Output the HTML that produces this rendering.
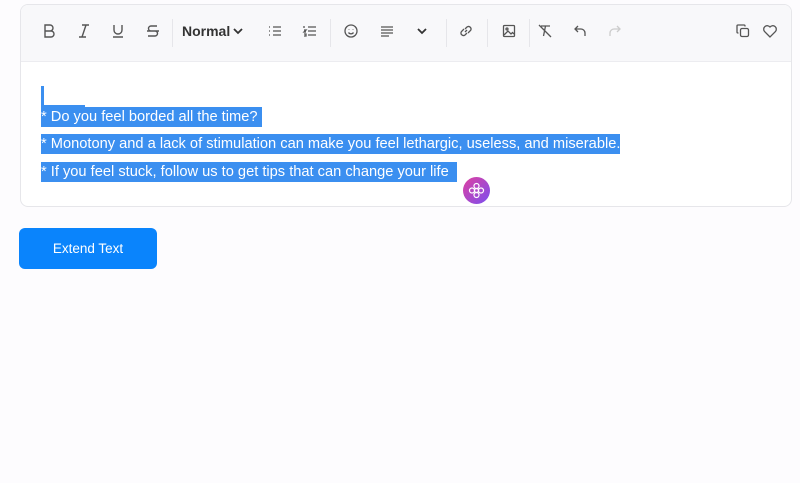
<!DOCTYPE html>
<html><head><style>
body{margin:0;width:800px;height:483px;background:#fdfcfe;font-family:"Liberation Sans",sans-serif;overflow:hidden;position:relative}
.box{position:absolute;left:20px;top:4px;width:770px;height:201px;border:1px solid #e6e6ea;border-radius:8px;background:#fff;overflow:hidden}
.tb{position:absolute;left:0;top:0;right:0;height:56px;background:#f8f8fa;border-bottom:1px solid #ececf0}
.i{position:absolute;top:18px}
.sep{position:absolute;top:14px;width:1px;height:28px;background:#e6e6ea}
.hl{position:absolute;left:41px;height:20px;background:#3b8ff0;color:#fff;font-size:14.65px;line-height:20px;white-space:pre}
.btn{position:absolute;left:19px;top:228px;width:138px;height:41px;background:#0a84fc;border-radius:6px;color:#fff;font-size:13.5px;line-height:41px;text-align:center}
</style></head><body>
<div class="box"><div class="tb">
<svg class="i" style="left:20px" width="16" height="16" viewBox="0 0 16 16" fill="none" stroke="#555" stroke-width="1.4"><path d="M4 2h5a3 3 0 0 1 0 6H4zM4 8h6a3 3 0 0 1 0 6H4z"/></svg>
<svg class="i" style="left:55px" width="16" height="16" viewBox="0 0 16 16" fill="none" stroke="#555" stroke-width="1.4"><path d="M6 2h7M3 14h7M10 2L6 14"/></svg>
<svg class="i" style="left:89px" width="16" height="16" viewBox="0 0 16 16" fill="none" stroke="#555" stroke-width="1.4"><path d="M4 2v5a4 4 0 0 0 8 0V2M3 14h10"/></svg>
<svg class="i" style="left:124px" width="16" height="16" viewBox="0 0 16 16" fill="none" stroke="#555" stroke-width="1.4"><path d="M12 3H6a2.5 2.5 0 0 0 0 5h4a2.5 2.5 0 0 1 0 5H3M2 8h12"/></svg>
<div class="sep" style="left:151px"></div>
<div style="position:absolute;left:161px;top:18px;font-size:14px;font-weight:bold;color:#333">Normal</div>
<svg class="i" style="left:211px;top:20px" width="12" height="12" viewBox="0 0 12 12" fill="none" stroke="#333" stroke-width="1.8"><path d="M2 4l4 4 4-4"/></svg>
<svg class="i" style="left:246px" width="16" height="16" viewBox="0 0 16 16" fill="none" stroke="#555" stroke-width="1.3"><path d="M6 4h8M6 8h8M6 12h8M2 4h1M2 8h1M2 12h1"/></svg>
<svg class="i" style="left:281px" width="16" height="16" viewBox="0 0 16 16" fill="none" stroke="#555" stroke-width="1.3"><path d="M6 4h8M6 8h8M6 12h8M2 3v2M2 7h2l-2 2h2M2 11h2v2H2"/></svg>
<div class="sep" style="left:309px"></div>
<svg class="i" style="left:322px" width="16" height="16" viewBox="0 0 16 16" fill="none" stroke="#555" stroke-width="1.3"><circle cx="8" cy="8" r="6"/><path d="M5.5 9.5a3 3 0 0 0 5 0M6 6v.5M10 6v.5"/></svg>
<svg class="i" style="left:358px" width="16" height="16" viewBox="0 0 16 16" fill="none" stroke="#555" stroke-width="1.3"><path d="M2 4h12M2 7h12M2 10h12M2 13h8"/></svg>
<svg class="i" style="left:395px;top:20px" width="12" height="12" viewBox="0 0 12 12" fill="none" stroke="#333" stroke-width="1.8"><path d="M2 4l4 4 4-4"/></svg>
<div class="sep" style="left:425px"></div>
<svg class="i" style="left:437px" width="16" height="16" viewBox="0 0 16 16" fill="none" stroke="#555" stroke-width="1.3"><path d="M7 9l2-2M6 6l-2.5 2.5a2.5 2.5 0 0 0 3.5 3.5L9 10M10 10l2.5-2.5a2.5 2.5 0 0 0-3.5-3.5L7 6"/></svg>
<div class="sep" style="left:466px"></div>
<svg class="i" style="left:480px" width="16" height="16" viewBox="0 0 16 16" fill="none" stroke="#555" stroke-width="1.3"><rect x="2.5" y="2.5" width="11" height="11" rx="1"/><circle cx="6" cy="6" r="1"/><path d="M3 12l4-4 3 3 1.5-1.5L13 11"/></svg>
<div class="sep" style="left:508px"></div>
<svg class="i" style="left:516px" width="16" height="16" viewBox="0 0 16 16" fill="none" stroke="#555" stroke-width="1.3"><path d="M4 3h9M8.5 3l-2 10M2 2l12 12"/></svg>
<svg class="i" style="left:551px" width="16" height="16" viewBox="0 0 16 16" fill="none" stroke="#555" stroke-width="1.3"><path d="M6 3L3 6l3 3M3 6h6a4 4 0 0 1 4 4v3"/></svg>
<svg class="i" style="left:586px" width="16" height="16" viewBox="0 0 16 16" fill="none" stroke="#ccc" stroke-width="1.3"><path d="M10 3l3 3-3 3M13 6H7a4 4 0 0 0-4 4v3"/></svg>
<svg class="i" style="left:714px" width="16" height="16" viewBox="0 0 16 16" fill="none" stroke="#555" stroke-width="1.3"><rect x="5.5" y="5.5" width="8" height="8" rx="1.5"/><path d="M10 3.5V3a1 1 0 0 0-1-1H3a1 1 0 0 0-1 1v6a1 1 0 0 0 1 1h.5"/></svg>
<svg class="i" style="left:741px" width="16" height="16" viewBox="0 0 16 16" fill="none" stroke="#555" stroke-width="1.3"><path d="M8 14L2.5 8.5a3.2 3.2 0 0 1 5.5-4.5 3.2 3.2 0 0 1 5.5 4.5z"/></svg>
</div></div>
<div style="position:absolute;left:41px;top:86px;width:3px;height:21px;background:#3b8ff0"></div>
<div style="position:absolute;left:41px;top:105px;width:44px;height:2px;background:#3b8ff0"></div>
<div class="hl" style="top:107px">* Do you feel borded all the time? </div>
<div class="hl" style="top:134px">* Monotony and a lack of stimulation can make you feel lethargic, useless, and miserable.</div>
<div class="hl" style="top:162px">* If you feel stuck, follow us to get tips that can change your life  </div>
<div style="position:absolute;left:463px;top:177px;width:27px;height:27px;border-radius:50%;background:linear-gradient(135deg,#e040a0,#7a4ff0)"></div>
<svg style="position:absolute;left:468px;top:182px" width="17" height="17" viewBox="0 0 17 17" fill="none" stroke="#fff" stroke-width="1.2"><circle cx="8.5" cy="8.5" r="2"/><circle cx="8.5" cy="4" r="2.5"/><circle cx="8.5" cy="13" r="2.5"/><circle cx="4" cy="8.5" r="2.5"/><circle cx="13" cy="8.5" r="2.5"/></svg>
<div class="btn">Extend Text</div>
</body></html>
